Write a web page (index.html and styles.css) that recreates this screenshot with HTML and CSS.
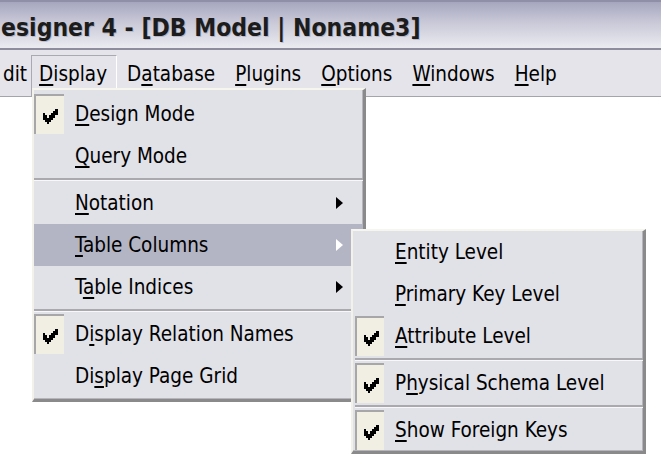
FILE: index.html
```html
<!DOCTYPE html>
<html>
<head>
<meta charset="utf-8">
<link rel="stylesheet" href="styles.css">
</head>
<body>
<div class="titlebar"><span class="title">esigner 4 - [DB Model | Noname3]</span></div>
<div class="menubar">
  <span class="mi edit">dit</span>
  <span class="mi open"><u>D</u>isplay</span>
  <span class="mi">D<u>a</u>tabase</span>
  <span class="mi"><u>P</u>lugins</span>
  <span class="mi"><u>O</u>ptions</span>
  <span class="mi"><u>W</u>indows</span>
  <span class="mi"><u>H</u>elp</span>
</div>
<div class="client"></div>

<div class="popup main">
  <div class="row"><span class="chk on"><svg viewBox="0 0 7 7" width="16" height="15" shape-rendering="crispEdges"><path d="M6 0h1v1h-1zM5 1h2v1h-2zM0 2h1v1h-1zM4 2h3v1h-3zM0 3h2v1h-2zM3 3h3v1h-3zM0 4h5v1h-5zM1 5h3v1h-3zM2 6h1v1h-1z" fill="#000"/></svg></span><span class="lbl"><u>D</u>esign Mode</span></div>
  <div class="row"><span class="chk"></span><span class="lbl"><u>Q</u>uery Mode</span></div>
  <div class="sep"></div>
  <div class="row"><span class="chk"></span><span class="lbl"><u>N</u>otation</span><span class="arrow"></span></div>
  <div class="row hl"><span class="chk"></span><span class="lbl"><u>T</u>able Columns</span><span class="arrow white"></span></div>
  <div class="row"><span class="chk"></span><span class="lbl">T<u>a</u>ble Indices</span><span class="arrow"></span></div>
  <div class="sep"></div>
  <div class="row"><span class="chk on"><svg viewBox="0 0 7 7" width="16" height="15" shape-rendering="crispEdges"><path d="M6 0h1v1h-1zM5 1h2v1h-2zM0 2h1v1h-1zM4 2h3v1h-3zM0 3h2v1h-2zM3 3h3v1h-3zM0 4h5v1h-5zM1 5h3v1h-3zM2 6h1v1h-1z" fill="#000"/></svg></span><span class="lbl">D<u>i</u>splay Relation Names</span></div>
  <div class="row"><span class="chk"></span><span class="lbl">Di<u>s</u>play Page Grid</span></div>
</div>

<div class="popup sub">
  <div class="row"><span class="chk"></span><span class="lbl"><u>E</u>ntity Level</span></div>
  <div class="row"><span class="chk"></span><span class="lbl"><u>P</u>rimary Key Level</span></div>
  <div class="row"><span class="chk on"><svg viewBox="0 0 7 7" width="16" height="15" shape-rendering="crispEdges"><path d="M6 0h1v1h-1zM5 1h2v1h-2zM0 2h1v1h-1zM4 2h3v1h-3zM0 3h2v1h-2zM3 3h3v1h-3zM0 4h5v1h-5zM1 5h3v1h-3zM2 6h1v1h-1z" fill="#000"/></svg></span><span class="lbl"><u>A</u>ttribute Level</span></div>
  <div class="sep"></div>
  <div class="row"><span class="chk on"><svg viewBox="0 0 7 7" width="16" height="15" shape-rendering="crispEdges"><path d="M6 0h1v1h-1zM5 1h2v1h-2zM0 2h1v1h-1zM4 2h3v1h-3zM0 3h2v1h-2zM3 3h3v1h-3zM0 4h5v1h-5zM1 5h3v1h-3zM2 6h1v1h-1z" fill="#000"/></svg></span><span class="lbl">P<u>h</u>ysical Schema Level</span></div>
  <div class="sep"></div>
  <div class="row"><span class="chk on"><svg viewBox="0 0 7 7" width="16" height="15" shape-rendering="crispEdges"><path d="M6 0h1v1h-1zM5 1h2v1h-2zM0 2h1v1h-1zM4 2h3v1h-3zM0 3h2v1h-2zM3 3h3v1h-3zM0 4h5v1h-5zM1 5h3v1h-3zM2 6h1v1h-1z" fill="#000"/></svg></span><span class="lbl"><u>S</u>how Foreign Keys</span></div>
</div>
</body>
</html>
```
FILE: styles.css
```css
html, body {
  margin: 0;
  padding: 0;
}
body {
  width: 661px;
  height: 473px;
  overflow: hidden;
  position: relative;
  background: #ffffff;
  font-family: "DejaVu Sans Condensed", "Liberation Sans", sans-serif;
  font-size: 20.5px;
  color: #000;
}
u {
  text-decoration: underline;
  text-decoration-thickness: 2px;
  text-underline-offset: 3px;
}
.titlebar {
  height: 46px;
  border-top: 2px solid #8f90a8;
  border-bottom: 2px solid #8d8d9d;
  background: linear-gradient(#a6a7bf 0%, #c9c9d8 45%, #ebebf1 100%);
  display: flex;
  align-items: center;
  white-space: nowrap;
  overflow: hidden;
}
.title {
  font-family: "DejaVu Sans Condensed", "Liberation Sans", sans-serif;
  font-weight: bold;
  font-size: 24.5px;
  color: #1c1c1c;
  margin-left: 1px;
  margin-top: 4px;
  text-shadow: 1px 1px 0 rgba(120,120,140,0.35);
}
.menubar {
  height: 46px;
  background: #e4e4ea;
  border-bottom: 1px solid #a4a4ac;
  display: flex;
  align-items: flex-end;
  white-space: nowrap;
}
.mi {
  padding: 0 9px;
  height: 40px;
  line-height: 36px;
  border: 1px solid transparent;
  border-bottom: none;
}
.mi.edit {
  margin-left: -7px;
  padding-right: 3px;
}
.mi.open {
  border-color: #a9a9b1 #ffffff transparent #a9a9b1;
  padding-left: 7px;
}
.client {
  background: #ffffff;
}
.popup {
  position: absolute;
  background: #e1e1e8;
  border-style: solid;
  border-width: 2px 3px 3px 2px;
  border-color: #f7f6ee #8a8a8a #8a8a8a #f3f2ea;
  box-shadow: inset -1px -1px 0 #b5b5bb;
}
.popup.main {
  left: 32px;
  top: 88px;
  width: 329px;
  padding: 3px 0 2px;
}
.popup.sub {
  left: 351px;
  top: 229px;
  width: 288px;
  padding: 0 0 0 2px;
}
.row {
  height: 42px;
  display: flex;
  align-items: center;
  white-space: nowrap;
}
.row.hl {
  background: #b4b5c4;
}
.chk {
  width: 30px;
  height: 40px;
  flex: none;
  box-sizing: border-box;
  display: flex;
  align-items: center;
  justify-content: center;
}
.sub .chk {
  width: 29px;
}
.chk.on {
  background: #f1efe4;
  border-top: 2px solid #a7a7aa;
  border-left: 2px solid #a7a7aa;
  padding-top: 2px;
}
.lbl {
  margin-left: 11px;
}
.arrow {
  margin-left: auto;
  margin-right: 20px;
  width: 0;
  height: 0;
  border-left: 7px solid #000;
  border-top: 6px solid transparent;
  border-bottom: 6px solid transparent;
}
.arrow.white {
  border-left-color: #ffffff;
}
.sep {
  height: 1px;
  margin: 1px 0;
  border-top: 2px solid #a9a9ae;
  background: #f8f8fb;
}
```
